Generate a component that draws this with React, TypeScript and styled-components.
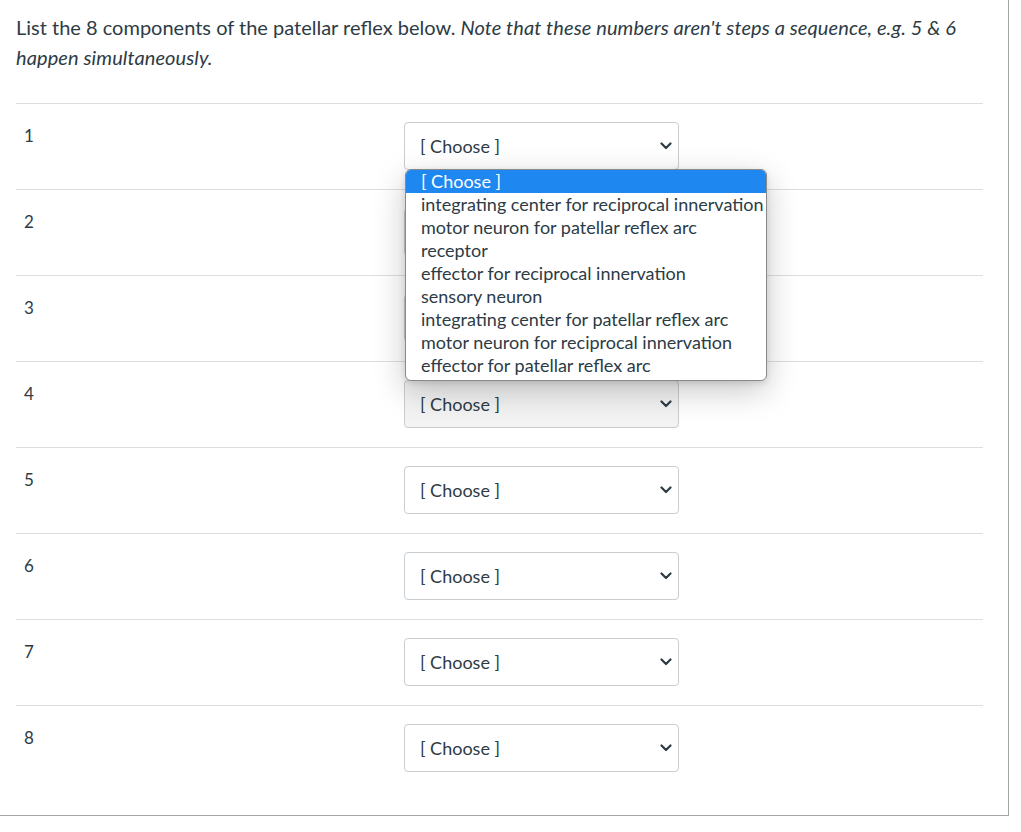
import React from "react";
import styled, { createGlobalStyle } from "styled-components";

const GlobalStyle = createGlobalStyle`
  html, body {
    margin: 0;
    padding: 0;
    background: #ffffff;
  }
  body {
    font-family: Lato, "Noto Sans", "Liberation Sans", sans-serif;
    color: #2d3b45;
  }
`;

const Panel = styled.div`
  position: relative;
  box-sizing: border-box;
  width: 1009px;
  height: 816px;
  padding: 12px 25px 0 16px;
  border-right: 1px solid #a5a5a5;
  border-bottom: 1px solid #a5a5a5;
  background: #ffffff;
`;

const Prompt = styled.p`
  margin: 0 0 31px 0;
  font-size: 20px;
  line-height: 30px;
  color: #2d3b45;
  padding-right: 14px;

  em {
    font-style: italic;
    letter-spacing: 0.1px;
  }
`;

const Rows = styled.div`
  display: flex;
  flex-direction: column;
`;

const Row = styled.div`
  position: relative;
  display: grid;
  grid-template-columns: 388px 1fr;
  height: 86px;
  box-sizing: border-box;
  border-top: 1px solid #dcdfe1;
`;

const Num = styled.div`
  padding: 22px 0 0 8px;
  font-size: 17px;
  line-height: 20px;
  color: #2d3b45;
`;

const SelectBox = styled.div<{ $shaded?: boolean }>`
  margin-top: 18px;
  box-sizing: border-box;
  width: 275px;
  height: 48px;
  display: flex;
  align-items: center;
  justify-content: space-between;
  padding: 0 6px 0 15px;
  border: 1px solid #c7cdd1;
  border-radius: 4px;
  background: ${(p) => (p.$shaded ? "#f3f3f3" : "#ffffff")};
  font-size: 18px;
  color: #2d3b45;
`;

const Chevron = () => (
  <svg width="12" height="8" viewBox="0 0 12 8" aria-hidden="true">
    <polyline
      points="1.5,1.5 6,6 10.5,1.5"
      fill="none"
      stroke="#2d3b45"
      strokeWidth="2.2"
      strokeLinecap="round"
      strokeLinejoin="round"
    />
  </svg>
);

const ListBox = styled.ul`
  position: absolute;
  top: 169px;
  left: 405px;
  z-index: 5;
  width: 362px;
  margin: 0;
  padding: 0 0 3px 0;
  list-style: none;
  box-sizing: border-box;
  background: #ffffff;
  border: 1px solid #8a8a8a;
  border-radius: 6px;
  box-shadow: 0 10px 32px rgba(0, 0, 0, 0.22), 0 2px 6px rgba(0, 0, 0, 0.12);
  overflow: hidden;
`;

const Option = styled.li<{ $active?: boolean }>`
  height: 23px;
  line-height: 22px;
  padding-left: 15px;
  font-size: 18px;
  white-space: nowrap;
  color: ${(p) => (p.$active ? "#ffffff" : "#2d3b45")};
  background: ${(p) => (p.$active ? "#1e87f0" : "transparent")};
`;

const options = [
  "[ Choose ]",
  "integrating center for reciprocal innervation",
  "motor neuron for patellar reflex arc",
  "receptor",
  "effector for reciprocal innervation",
  "sensory neuron",
  "integrating center for patellar reflex arc",
  "motor neuron for reciprocal innervation",
  "effector for patellar reflex arc",
];

export default function App() {
  const rows = [1, 2, 3, 4, 5, 6, 7, 8];
  return (
    <>
      <GlobalStyle />
      <Panel>
        <Prompt>
          List the 8 components of the patellar reflex below.{" "}
          <em>
            Note that these numbers aren't steps a sequence, e.g. 5 &amp; 6
            happen simultaneously.
          </em>
        </Prompt>
        <Rows>
          {rows.map((n) => (
            <Row key={n}>
              <Num>{n}</Num>
              <div>
                <SelectBox $shaded={n === 4}>
                  <span>[ Choose ]</span>
                  <Chevron />
                </SelectBox>
              </div>
            </Row>
          ))}
        </Rows>
        <ListBox role="listbox">
          {options.map((o, i) => (
            <Option key={o} $active={i === 0}>
              {o}
            </Option>
          ))}
        </ListBox>
      </Panel>
    </>
  );
}
